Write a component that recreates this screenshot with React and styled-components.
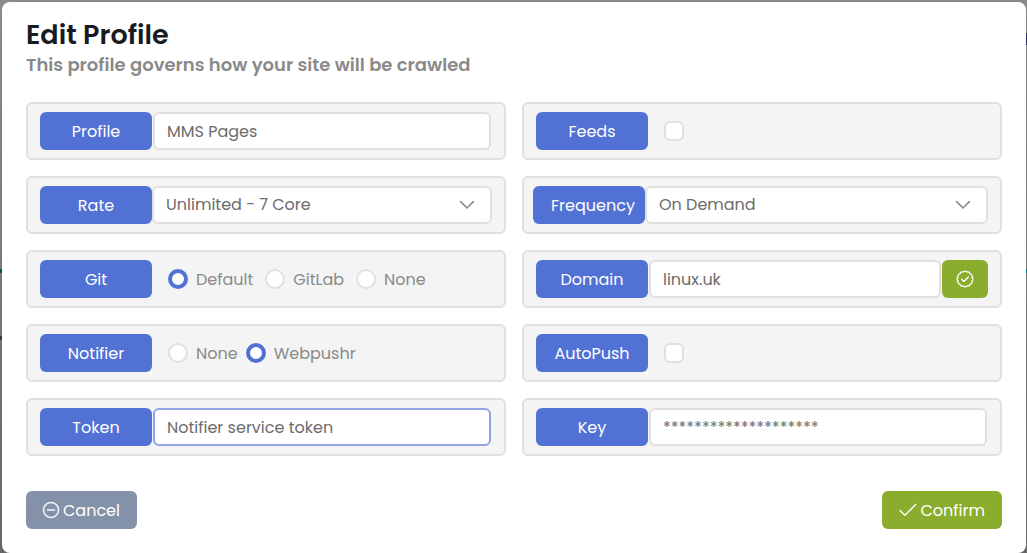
import { useState } from "react";
import styled, { createGlobalStyle, ThemeProvider } from "styled-components";
import { BsDashCircle } from "react-icons/bs";

const theme = {
  colors: {
    primary: "#5271d4",
    focus: "#92a4e5",
    success: "#8bad2d",
    muted: "#8392a8",
    panel: "#f4f4f4",
    border: "#e0e0e0",
    title: "#171b22",
    subtitle: "#8a8a8a",
    text: "#6c6c6c",
    option: "#8a8a8a",
    white: "#fff",
  },
  radius: "6px",
};

const App = () => {
  const [git, setGit] = useState("Default");
  const [notifier, setNotifier] = useState("Webpushr");

  return (
    <ThemeProvider theme={theme}>
      <GlobalStyle />
      <Backdrop>
        <Modal role="dialog" aria-labelledby="modal-title">
          <Title id="modal-title">Edit Profile</Title>
          <Subtitle>This profile governs how your site will be crawled</Subtitle>

          <Grid>
            <TextField id="profile" label="Profile" value="MMS Pages" />
            <CheckField id="feeds" label="Feeds" />
            <SelectField
              id="rate"
              label="Rate"
              options={["Unlimited - 7 Core", "Limited - 1 Core"]}
            />
            <SelectField
              id="frequency"
              label="Frequency"
              options={["On Demand", "Daily", "Weekly"]}
              wide
            />
            <RadioField
              id="git"
              label="Git"
              options={["Default", "GitLab", "None"]}
              value={git}
              onChange={setGit}
              gap="12px"
            />
            <TextField id="domain" label="Domain" value="linux.uk">
              <VerifyButton type="button" aria-label="Verify">
                <VerifiedIcon />
              </VerifyButton>
            </TextField>
            <RadioField
              id="notifier"
              label="Notifier"
              options={["None", "Webpushr"]}
              value={notifier}
              onChange={setNotifier}
              gap="8px"
            />
            <CheckField id="autopush" label="AutoPush" />
            <TextField
              id="token"
              label="Token"
              value="Notifier service token"
              active
            />
            <TextField id="key" label="Key" value="********************" />
          </Grid>

          <Actions>
            <Button type="button">
              <BsDashCircle size={16} />
              Cancel
            </Button>
            <Button type="button" $variant="success">
              <CheckIcon />
              Confirm
            </Button>
          </Actions>
        </Modal>
      </Backdrop>
    </ThemeProvider>
  );
};

export default App;

const CheckIcon = () => (
  <svg width="18" height="16" viewBox="0 0 18 16" fill="none">
    <path
      d="M1 8.6l4.9 4.7L16.6 2.6"
      stroke="currentColor"
      strokeWidth="1.4"
      strokeLinecap="round"
      strokeLinejoin="round"
    />
  </svg>
);

const ChevronIcon = () => (
  <svg width="16" height="16" viewBox="0 0 16 16" fill="none">
    <path
      d="M1.6 4.6L8 11l6.4-6.4"
      stroke="currentColor"
      strokeWidth="1.6"
      strokeLinecap="round"
      strokeLinejoin="round"
    />
  </svg>
);

// scalloped badge, one arc per bump
const bumps = Array.from({ length: 12 }, (_, i) => {
  const angle = ((i + 0.5) * Math.PI) / 6;
  const x = (9 + 7.2 * Math.cos(angle)).toFixed(2);
  const y = (9 + 7.2 * Math.sin(angle)).toFixed(2);
  return `${x} ${y}`;
});

const badgePath = `M${bumps[0]} ${[...bumps.slice(1), bumps[0]]
  .map((point) => `A2.3 2.3 0 0 1 ${point}`)
  .join(" ")}Z`;

const VerifiedIcon = () => (
  <svg
    width="18"
    height="18"
    viewBox="0 0 18 18"
    fill="none"
    stroke="currentColor"
    strokeLinecap="round"
    strokeLinejoin="round"
  >
    <path d={badgePath} strokeWidth="1.3" />
    <path d="M5.6 9.3l2.3 2.2 4.5-4.6" strokeWidth="1.4" />
  </svg>
);

const TextField = ({ id, label, value, active, children }) => (
  <Panel>
    <Label htmlFor={id}>{label}</Label>
    <Input id={id} type="text" defaultValue={value} $active={active} />
    {children}
  </Panel>
);

const CheckField = ({ id, label }) => (
  <Panel>
    <Label htmlFor={id}>{label}</Label>
    <Checkbox id={id} type="checkbox" />
  </Panel>
);

const SelectField = ({ id, label, options, wide }) => (
  <Panel $wide={wide}>
    <Label htmlFor={id}>{label}</Label>
    <SelectWrap>
      <Select id={id}>
        {options.map((option) => (
          <option key={option}>{option}</option>
        ))}
      </Select>
      <ChevronIcon />
    </SelectWrap>
  </Panel>
);

const RadioField = ({ id, label, options, value, onChange, gap }) => (
  <Panel>
    <Label as="span" id={`${id}-label`}>
      {label}
    </Label>
    <RadioGroup role="radiogroup" aria-labelledby={`${id}-label`} $gap={gap}>
      {options.map((option) => (
        <Option key={option}>
          <Radio
            type="radio"
            name={id}
            checked={value === option}
            onChange={() => onChange(option)}
          />
          {option}
        </Option>
      ))}
    </RadioGroup>
  </Panel>
);

const GlobalStyle = createGlobalStyle`
  * {
    box-sizing: border-box;
  }

  body {
    margin: 0;
    font-family: Poppins, Inter, "Liberation Sans", sans-serif;
    font-size: 16px;
  }

  button,
  input,
  select {
    font: inherit;
  }
`;

/* the dimmed page shows as a thin strip round the dialog */
const Backdrop = styled.div`
  min-height: 100vh;
  padding: 2px 1px 0 2px;
  background:
    linear-gradient(#0b5443, #0b5443) 0 269px / 2px 4px no-repeat,
    linear-gradient(#3c3c3c, #3c3c3c) 0 336px / 2px 4px no-repeat,
    linear-gradient(#2b2763, #2b2763) 100% 33px / 1px 12px no-repeat,
    linear-gradient(#0a7a7a, #0a7a7a) 100% 269px / 1px 4px no-repeat,
    linear-gradient(#8a8a8a, #666);
`;

const Modal = styled.form`
  padding: 16px 24px 24px;
  border-radius: 8px;
  background-color: ${({ theme }) => theme.colors.white};
`;

const Title = styled.h1`
  margin: 0;
  color: ${({ theme }) => theme.colors.title};
  font-size: 27px;
  font-weight: 600;
  line-height: 34px;
`;

const Subtitle = styled.p`
  margin: 0 0 24px;
  color: ${({ theme }) => theme.colors.subtitle};
  font-size: 18px;
  font-weight: 600;
  line-height: 26px;
`;

const Grid = styled.div`
  display: grid;
  grid-template-columns: repeat(2, minmax(0, 1fr));
  gap: 16px;
`;

const Panel = styled.div`
  display: flex;
  align-items: center;
  padding: ${({ $wide }) => ($wide ? "8px 12px 8px 9px" : "8px 12px")};
  border: 2px solid ${({ theme }) => theme.colors.border};
  border-radius: ${({ theme }) => theme.radius};
  background-color: ${({ theme }) => theme.colors.panel};
`;

const Label = styled.label`
  flex: 0 0 112px;
  min-width: 0;
  padding: 8px 18px 6px;
  border-radius: ${({ theme }) => theme.radius};
  background-color: ${({ theme }) => theme.colors.primary};
  color: ${({ theme }) => theme.colors.white};
  line-height: 24px;
  text-align: center;
  white-space: nowrap;
`;

const Input = styled.input`
  flex: 1;
  min-width: 0;
  height: 38px;
  margin: 0 1px;
  padding: 0 12px;
  border: 2px solid
    ${({ theme, $active }) =>
      $active ? theme.colors.focus : theme.colors.border};
  border-radius: ${({ theme }) => theme.radius};
  outline: 0;
  background-color: ${({ theme }) => theme.colors.white};
  color: ${({ theme }) => theme.colors.text};

  &:focus {
    border-color: ${({ theme }) => theme.colors.focus};
  }
`;

const SelectWrap = styled.div`
  position: relative;
  flex: 1;
  min-width: 0;

  svg {
    position: absolute;
    top: 11px;
    right: 17px;
    color: ${({ theme }) => theme.colors.option};
    pointer-events: none;
  }
`;

const Select = styled.select`
  display: block;
  width: 100%;
  height: 38px;
  padding: 0 40px 2px 12px;
  border: 2px solid ${({ theme }) => theme.colors.border};
  border-radius: ${({ theme }) => theme.radius};
  appearance: none;
  background-color: ${({ theme }) => theme.colors.white};
  color: ${({ theme }) => theme.colors.text};
`;

const Checkbox = styled.input`
  width: 20px;
  height: 20px;
  margin: 0 0 0 16px;
  border: 2px solid ${({ theme }) => theme.colors.border};
  border-radius: ${({ theme }) => theme.radius};
  appearance: none;
  background-color: ${({ theme }) => theme.colors.white};

  &:checked {
    background-color: ${({ theme }) => theme.colors.primary};
  }
`;

const RadioGroup = styled.div`
  display: flex;
  gap: ${({ $gap }) => $gap};
  margin-left: 16px;
`;

const Option = styled.label`
  display: flex;
  align-items: center;
  gap: 8px;
  color: ${({ theme }) => theme.colors.option};
`;

const Radio = styled.input`
  width: 20px;
  height: 20px;
  margin: 0;
  border: 2px solid ${({ theme }) => theme.colors.border};
  border-radius: 50%;
  appearance: none;
  background-color: ${({ theme }) => theme.colors.white};

  &:checked {
    border: 4px solid ${({ theme }) => theme.colors.primary};
  }
`;

const Button = styled.button`
  display: inline-flex;
  align-items: center;
  justify-content: center;
  gap: 4px;
  height: 38px;
  padding: 0 17px;
  border: 0;
  border-radius: ${({ theme }) => theme.radius};
  background-color: ${({ theme, $variant }) =>
    $variant === "success" ? theme.colors.success : theme.colors.muted};
  color: ${({ theme }) => theme.colors.white};
  cursor: pointer;

  svg {
    overflow: visible;
    stroke-width: 0.4;
  }
`;

const VerifyButton = styled(Button).attrs({ $variant: "success" })`
  flex: 0 0 46px;
  padding: 0;
`;

const Actions = styled.div`
  display: flex;
  justify-content: space-between;
  margin-top: 35px;
`;
